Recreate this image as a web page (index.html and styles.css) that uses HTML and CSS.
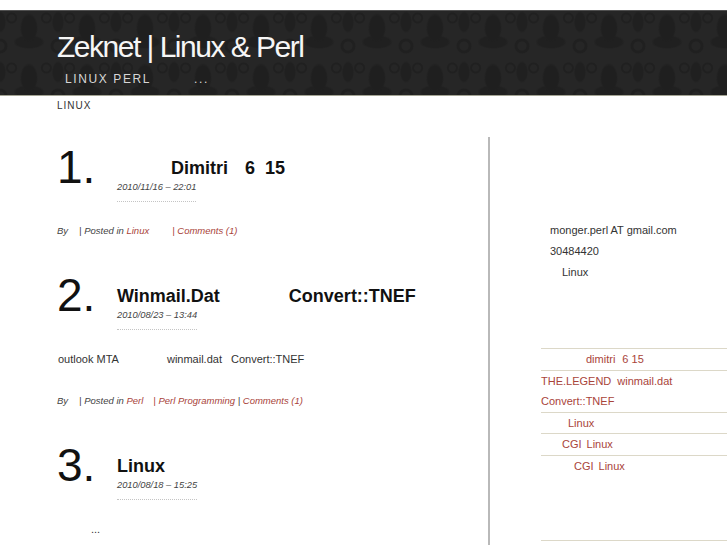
FILE: index.html
```html
<!DOCTYPE html>
<html lang="zh">
<head>
<meta charset="utf-8">
<title>Zeknet | Linux &amp; Perl</title>
<link rel="stylesheet" href="styles.css">
</head>
<body>
<header class="site-header">
  <h1 class="site-title">Zeknet | Linux &amp; Perl</h1>
  <p class="site-desc">LINUX PERL<span class="gap g43"></span>...</p>
</header>
<nav class="nav">LINUX</nav>
<div class="layout">
  <main class="main">
    <article class="post">
      <div class="post-head">
        <div class="post-num">1.</div>
        <div class="post-titles">
          <h2 class="post-title"><span class="gap g54"></span>Dimitri<span class="gap g17"></span>6<span class="gap g10"></span>15</h2>
          <div class="post-date">2010/11/16 – 22:01</div>
        </div>
      </div>
      <p class="post-meta">By<span class="gap g11"></span>| Posted in <a class="link">Linux</a><span class="gap g23"></span><a class="link">| Comments (1)</a></p>
    </article>

    <article class="post">
      <div class="post-head">
        <div class="post-num">2.</div>
        <div class="post-titles">
          <h2 class="post-title">Winmail.Dat<span class="gap g69"></span>Convert::TNEF</h2>
          <div class="post-date">2010/08/23 – 13:44</div>
        </div>
      </div>
      <p class="post-excerpt">outlook MTA<span class="gap g48"></span>winmail.dat<span class="gap g9"></span>Convert::TNEF</p>
      <p class="post-meta">By<span class="gap g11"></span>| Posted in <a class="link">Perl</a><span class="gap g10"></span><a class="link">| Perl Programming</a> | <a class="link">Comments (1)</a></p>
    </article>

    <article class="post">
      <div class="post-head">
        <div class="post-num">3.</div>
        <div class="post-titles">
          <h2 class="post-title">Linux</h2>
          <div class="post-date">2010/08/18 – 15:25</div>
        </div>
      </div>
      <p class="post-excerpt"><span class="gap g33"></span>...</p>
    </article>
  </main>

  <aside class="sidebar">
    <div class="contact">
      <div>monger.perl AT gmail.com</div>
      <div>30484420</div>
      <div><span class="gap g12"></span>Linux</div>
    </div>
    <ul class="side-list">
      <li><a class="link"><span class="gap g45"></span>dimitri<span class="gap g7"></span>6 15</a></li>
      <li><a class="link">THE.LEGEND<span class="gap g6"></span>winmail.dat<br>Convert::TNEF</a></li>
      <li><a class="link"><span class="gap g27"></span>Linux</a></li>
      <li><a class="link"><span class="gap g21"></span>CGI<span class="gap g5"></span>Linux</a></li>
      <li><a class="link"><span class="gap g33"></span>CGI<span class="gap g5"></span>Linux</a></li>
    </ul>
  </aside>
</div>
</body>
</html>
```
FILE: styles.css
```css
* { box-sizing: border-box; }
html, body { margin: 0; padding: 0; background: #fff; }
body {
  font-family: "Liberation Sans", Arial, "Noto Sans CJK SC", sans-serif;
  color: #333;
  height: 545px;
  overflow: hidden;
}

.gap { display: inline-block; }
.g5 { width: 5px; } .g6 { width: 6px; } .g7 { width: 7px; } .g9 { width: 9px; }
.g10 { width: 10px; } .g11 { width: 11px; } .g12 { width: 12px; } .g17 { width: 17px; }
.g21 { width: 21px; } .g23 { width: 23px; } .g27 { width: 27px; } .g33 { width: 33px; }
.g43 { width: 43px; } .g45 { width: 45px; } .g48 { width: 48px; } .g54 { width: 54px; }
.g69 { width: 69px; }

.link { color: #a9443a; text-decoration: none; }

/* header */
.site-header {
  margin-top: 10px;
  height: 86px;
  border-top: 1px solid #505050;
  border-bottom: 1px solid #a4a494;
  padding: 18px 0 0 57px;
  background-color: #262626;
  background-image:
    radial-gradient(circle at 20% 22%, transparent 0 3px, #202020 4px 5px, transparent 6px),
    radial-gradient(circle at 80% 22%, transparent 0 3px, #202020 4px 5px, transparent 6px),
    radial-gradient(ellipse 9px 15px at 50% 42%, #1f1f1f 0 80%, transparent 100%),
    radial-gradient(ellipse 16px 7px at 50% 70%, #202020 0 80%, transparent 100%),
    radial-gradient(circle at 0% 78%, transparent 0 4px, #202020 5px 7px, transparent 8px),
    radial-gradient(circle at 100% 78%, transparent 0 4px, #202020 5px 7px, transparent 8px),
    radial-gradient(ellipse 6px 11px at 0% 30%, #202020 0 80%, transparent 100%),
    radial-gradient(ellipse 6px 11px at 100% 30%, #202020 0 80%, transparent 100%);
  background-size: 58px 50px;
  background-position: 0 -4px;
}
.site-title {
  margin: 0;
  font-size: 30px;
  line-height: 36px;
  font-weight: normal;
  letter-spacing: -1.5px;
  color: #f6f6f6;
}
.site-desc {
  margin: 6px 0 0 8px;
  font-size: 12px;
  line-height: 16px;
  letter-spacing: 1.6px;
  color: #d6d6d6;
}

/* nav */
.nav {
  height: 17px;
  padding: 3px 0 0 57px;
  font-size: 10px;
  line-height: 14px;
  letter-spacing: 1px;
  color: #333;
}

/* layout */
.layout { display: flex; margin-top: 24px; height: 408px; }
.main {
  width: 490px;
  flex: none;
  padding: 7px 0 0 57px;
  border-right: 2px solid #b9b9b9;
  overflow: hidden;
}
.sidebar { flex: 1; padding-top: 83px; overflow: hidden; }

/* posts */
.post { margin-bottom: 32px; }
.post-head { display: flex; align-items: flex-start; }
.post-num {
  width: 60px;
  flex: none;
  font-size: 46px;
  line-height: 46px;
  color: #111;
}
.post-titles { padding-top: 13px; }
.post-title {
  margin: 0;
  font-size: 18px;
  line-height: 22px;
  font-weight: bold;
  color: #111;
  white-space: nowrap;
}
.post-date {
  width: max-content;
  margin-top: 2px;
  padding-bottom: 8px;
  border-bottom: 1px dotted #c4c4c4;
  font-size: 9.3px;
  line-height: 12px;
  font-style: italic;
  color: #444;
}
.post-excerpt {
  margin: 20px 0 0;
  padding-left: 1px;
  font-size: 11px;
  line-height: 18px;
  color: #333;
}
.post-excerpt + .post-meta { margin-top: 24px; }
.post-meta {
  margin: 20px 0 0;
  font-size: 9.5px;
  line-height: 18px;
  font-style: italic;
  color: #444;
}

/* sidebar */
.contact {
  padding-left: 60px;
  font-size: 11px;
  line-height: 21px;
  color: #333;
}
.side-list {
  list-style: none;
  margin: 65px 0 0 51px;
  padding: 0 0 64px;
  border-bottom: 1px solid #dcd8c8;
}
.side-list li {
  border-top: 1px solid #dcd8c8;
  font-size: 11px;
  line-height: 20.5px;
  white-space: nowrap;
}
```
